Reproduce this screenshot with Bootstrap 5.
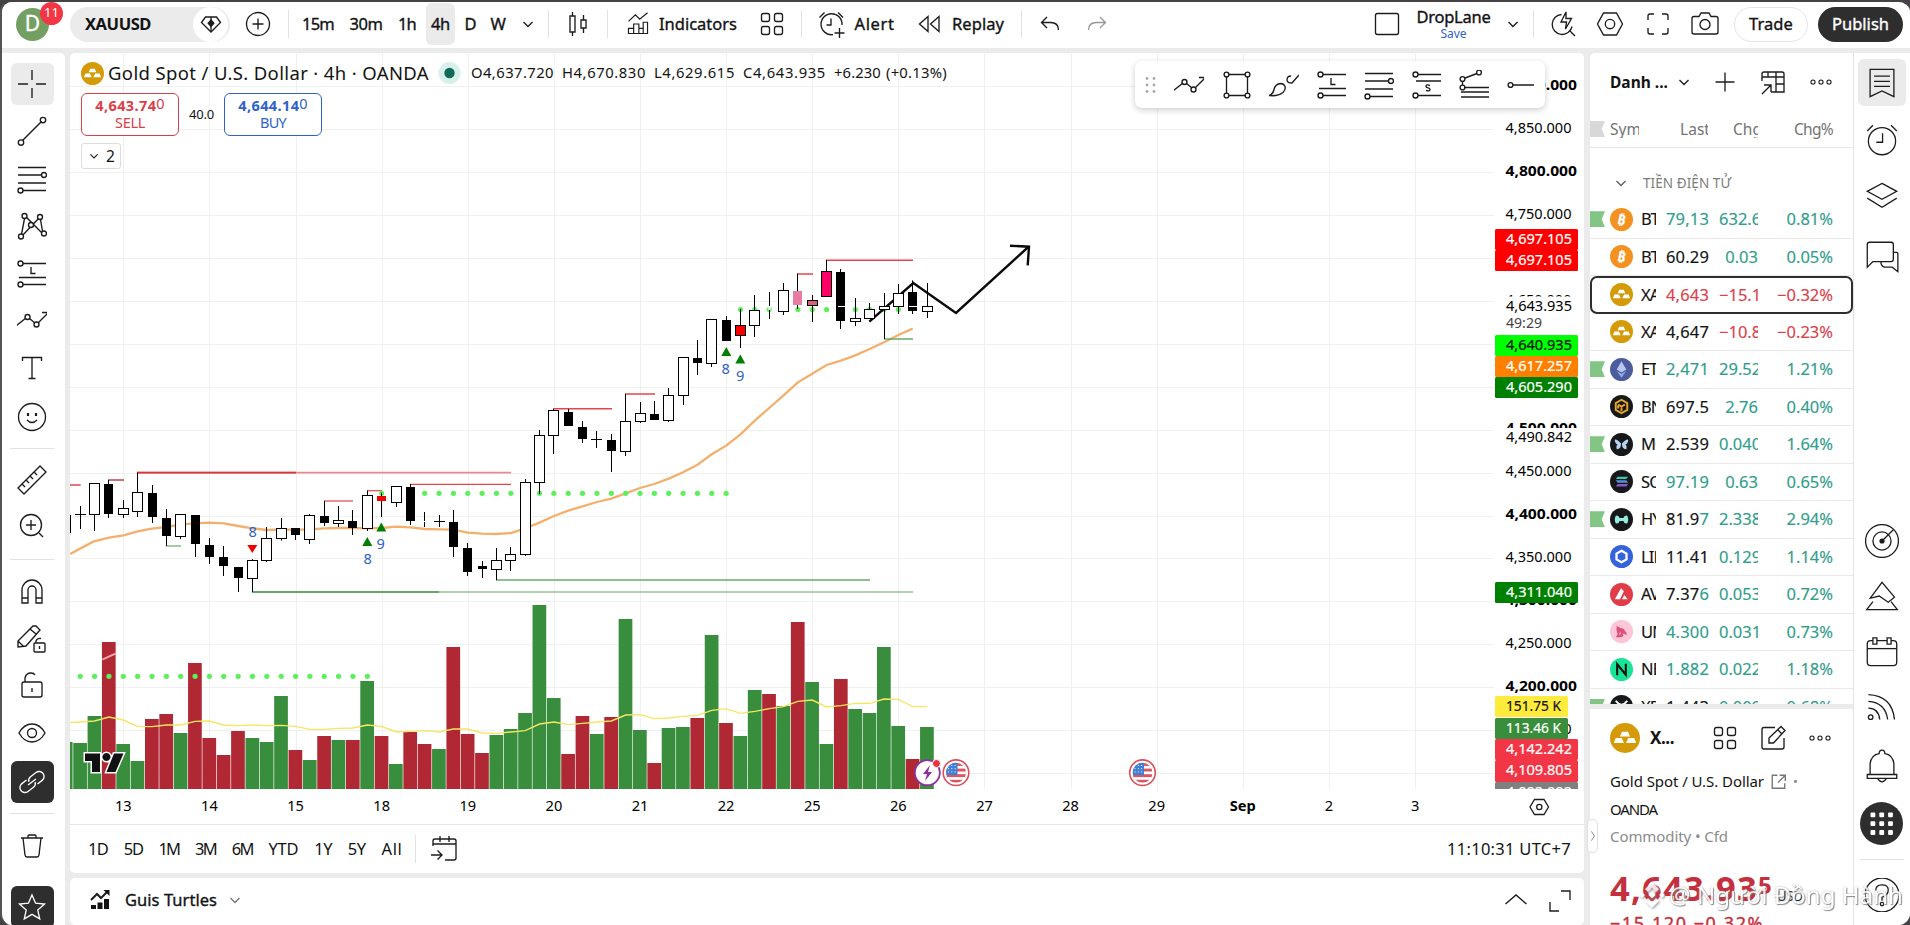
<!DOCTYPE html>
<html lang="vi">
<head>
<meta charset="utf-8">
<title>XAUUSD</title>
<link href="https://cdn.jsdelivr.net/npm/bootstrap@5.3.0/dist/css/bootstrap.min.css" rel="stylesheet">
<style>
html,body{height:925px;overflow:hidden}
body{background:#454245;font-family:"Noto Sans","Open Sans",sans-serif;color:#131313;font-size:16.5px;line-height:1.2}
.app{width:1910px;height:925px;background:#ebebeb;border-top:2px solid #454245;border-left:2px solid #565356;border-radius:12px;overflow:hidden;display:grid;grid-template-rows:46px 872px;row-gap:5px}
.ic{width:30px;height:30px;fill:none;stroke:#1c1c1c;stroke-width:1.35;flex:none;overflow:visible}
.t{white-space:nowrap;display:inline-block;flex:none}
.med{-webkit-text-stroke:.35px currentColor}
.topbar{display:grid;align-items:center;justify-items:center;padding-left:1px;
 grid-template-columns:59px 176px 40px 20px 40px 56px 26px 41px 19px 36px 24px 16px 44px 14px 134px 48px 10px 99px 112px 8px 49px 46px 250px 34px 99px 20px 21px 38px 56px 40px 54px 78px 101px;padding-bottom:2px}
.vsep{width:1px;height:28px;background:#e2e2e2}
.avatar{width:33px;height:33px;border-radius:50%;background:#739f63;color:#fff;font-size:21px;position:relative}
.notif{position:absolute;left:24px;top:-6px;width:23px;height:23px;border-radius:50%;background:#f23645;color:#fff;font-size:13px;-webkit-text-stroke:0}
.sympill{width:160px;height:35px;border-radius:18px;background:#ebebeb;padding:0 2px 0 15px}
.disc{width:35px;height:35px;border-radius:50%;background:#fff}
.on{background:#ebebeb;border-radius:6px}
.cur{height:42px;width:29px}
.tradebtn{height:35px;width:74px;border:1px solid #e4e4e4;border-radius:18px}
.pubbtn{height:35px;width:85px;background:#2e2e2e;color:#fff;border-radius:18px}
.main{display:grid;grid-template-columns:63px 1519px 270px 56px}
.tools{background:#fff;border-radius:0 5px 0 0;display:grid;justify-items:center;align-items:center;overflow:hidden;padding-top:7px;padding-right:3px;
 grid-template-rows:48px 46px 50px 44px 52px 40px 56px 41px 22px 42px 50px 16px 48px 47px 46px 50px 47px 16px 49px 74px}
.tb{width:43px;height:42px;border-radius:6px}
.dark{background:#2e2e2e}.dark .ic{stroke:#fff}
.hsep{height:1px;width:44px;background:#e0e0e0}
.mid{margin-left:5px;display:grid;grid-template-rows:820px 47px;row-gap:5px;min-width:0}
.pane{background:#fff;border-radius:5px;overflow:hidden;position:relative}
.plot{display:block;width:1514px;height:771px}
.ranges{height:49px;border-top:1px solid #e6e6e6;padding:0 13px 1px 18px;gap:15.7px;font-size:16.5px}
.legend{position:absolute;left:11px;top:8px}
.quote{width:98px;height:43px;border:1px solid;border-radius:6px;background:#fff;font-size:14.5px;line-height:17px}
.sell{color:#d8404a}.buy{color:#2f62c9}
.two{width:40px;height:26px;border:1px solid #dcdcdc;border-radius:3px;background:#fff;font-size:15.5px}
.floatbar{position:absolute;left:1065px;top:8px;width:410px;height:47px;border-radius:7px;background:#fff;box-shadow:0 2px 6px rgba(0,0,0,.2);display:grid;align-items:center;justify-items:center;grid-template-columns:30px 48px 47px 48px 47px 48px 48px 46px 48px}
.watch{display:grid;grid-template-rows:651px 216px;row-gap:5px;border-right:1px solid #e4e4e4;position:relative;margin-left:6px;z-index:1}
.wl{background:#fff;border-radius:5px 0 0 0;overflow:hidden}
.whead{height:58px;display:grid;align-items:center;grid-template-columns:20px 59px 31px 50px 45px 51px}
.wcols{height:37px;border-bottom:1px solid #e6e6e6;color:#747474;font-size:15.5px}
.rowgrid{display:grid;align-items:center;grid-template-columns:20px 31px 15px 10px 43px 10px 39px 75px}
.wrow{height:37.5px;border-bottom:1px solid #e9e9e9;font-size:16.5px;-webkit-text-stroke:.15px currentColor}
.wrow.sel{border:2px solid #2e2e2e;border-radius:7px}
.wrow.sel .rowgrid{margin:0 -2px}
.rowgrid>div{overflow:hidden;white-space:nowrap}
.sy{letter-spacing:-.9px}
.flag{width:15px;height:16px;background:#83c585;clip-path:polygon(0 0,100% 0,78% 50%,100% 100%,0 100%)}
.up{color:#2f9e8b}.dn{color:#dc404b}
.coin{width:23px;height:23px;display:block}
.detail{background:#fff;overflow:hidden;padding:14px 0 0 20px}
.rail{background:#fff;display:grid;justify-items:center;align-items:center;overflow:hidden;padding-top:6px;padding-right:1px;
 grid-template-rows:47px 68px 46px 74px 220px 54px 56px 56px 54px 64px 50px 22px 50px}
.rail .ic{width:34px;height:34px;stroke-width:1.15}
.grab{position:absolute;left:-3px;top:766px;width:11px;height:34px;background:#fff;border:1px solid #e0e0e0;border-radius:5px}
.wmark{position:absolute;left:1637px;top:880px;color:#fff;font-size:24px;text-shadow:1px 1px 1px #777,0 0 2px #999;z-index:5;opacity:.85}
text{font-family:"Noto Sans",sans-serif}
</style>
</head>
<body>
<svg width="0" height="0" class="position-absolute">
<symbol id="chev" viewBox="0 0 30 30"><path d="M10.500 13l4.500 4.500 4.500-4.500"/></symbol>
<symbol id="gem" viewBox="0 0 30 30"><path d="M9.500 8h11l4 5.500-9.500 9.500-9.500-9.500z"/><path d="M15 8v4M15 17v5" /><path d="M15 11l2.800 3.200L15 17.500l-2.800-3.300z" fill="#1c1c1c"/></symbol>
<symbol id="pluscirc" viewBox="0 0 30 30"><circle cx="15" cy="15" r="11.500"/><path d="M15 9.500v11M9.500 15h11"/></symbol>
<symbol id="plus" viewBox="0 0 30 30"><path d="M15 5.500v19M5.500 15h19"/></symbol>
<symbol id="candles" viewBox="0 0 30 30"><path d="M7 7h5v16H7zM9.500 3v4M9.500 23v4M18 11h5v8h-5zM20.500 6v5M20.500 19v5"/></symbol>
<symbol id="indic" viewBox="0 0 30 30"><path d="M4 12l8-7.500 5 5 9-7.500M4 26v-6h6v6zM10 26V15h6v11M16 20h5v6M21 26V13h5v13H4"/></symbol>
<symbol id="four" viewBox="0 0 30 30"><rect x="4.500" y="4.500" width="8" height="8" rx="2"/><rect x="17.500" y="4.500" width="8" height="8" rx="2"/><rect x="4.500" y="17.500" width="8" height="8" rx="2"/><rect x="17.500" y="17.500" width="8" height="8" rx="2"/></symbol>
<symbol id="alertp" viewBox="0 0 30 30"><path d="M25 16a10.500 10.500 0 1 0-9 9.600M14 9.500V16H9.500M2.500 8.500l5-5M21 3.500l5 5M22.500 19v10M17.500 24h10"/></symbol>
<symbol id="alarm" viewBox="0 0 30 30"><circle cx="15" cy="16" r="12"/><path d="M15.500 9v8H10M2 7l5-5M23 2l5 5"/></symbol>
<symbol id="replay" viewBox="0 0 30 30"><path d="M14 7.500v15L5.500 15zM25 7.500v15L16.500 15z"/></symbol>
<symbol id="undo" viewBox="0 0 30 30"><path d="M12 8l-5.500 5.500L12 19M7 13.500h8.500q8 0 8 7.500"/></symbol>
<symbol id="squ" viewBox="0 0 30 30"><rect x="3.500" y="4.500" width="23" height="21" rx="2"/></symbol>
<symbol id="qsearch" viewBox="0 0 30 30"><path d="M13.500 5.500a10 10 0 1 0 10.500 12M22 22l5 5M18 3l-5 10h5.500l-1 7 6-10.500H18z"/></symbol>
<symbol id="hexa" viewBox="0 0 30 30"><path d="M8.500 4h13l6 11-6 11h-13l-6-11z"/><circle cx="15" cy="15" r="4.700"/></symbol>
<symbol id="full" viewBox="0 0 30 30"><path d="M5 11V7q0-2 2-2h4M19 5h4q2 0 2 2v4M25 19v4q0 2-2 2h-4M11 25H7q-2 0-2-2v-4"/></symbol>
<symbol id="cam" viewBox="0 0 30 30"><path d="M4 7.500h5l2-3.500h8l2 3.500h5q2 0 2 2V23q0 2-2 2H4q-2 0-2-2V9.500q0-2 2-2z"/><circle cx="15" cy="15.500" r="5"/></symbol>
<symbol id="cross" viewBox="0 0 30 30"><path d="M15 1v10M15 19v10M1 15h10M19 15h10"/></symbol>
<symbol id="trend" viewBox="0 0 30 30"><path d="M5.500 24.500L24.500 5.500"/><circle cx="4" cy="26.500" r="2.700"/><circle cx="26" cy="4" r="2.700"/></symbol>
<symbol id="fib" viewBox="0 0 30 30"><path d="M1 3.500h28M1 11h24M1 19h28M6 26.500h23"/><circle cx="27" cy="11" r="2.500"/><circle cx="3.500" cy="26.500" r="2.500"/></symbol>
<symbol id="patt" viewBox="0 0 30 30"><path d="M4 26L8 5l18 18L23 6 4 26"/><g fill="#fff"><circle cx="4" cy="25.500" r="2.500"/><circle cx="7.500" cy="5" r="2.500"/><circle cx="14" cy="14" r="2.500"/><circle cx="23" cy="6" r="2.500"/><circle cx="27" cy="22.500" r="2.500"/></g></symbol>
<symbol id="posl" viewBox="0 0 30 30"><path d="M6 4.500h23M2 18.500h27M6 25.500h23M14 8v6.500h4.500"/><circle cx="3.500" cy="4.500" r="2.500"/><circle cx="3.500" cy="25.500" r="2.500"/></symbol>
<symbol id="poss" viewBox="0 0 30 30"><path d="M6 4.500h23M4 11h25M6 25.500h23"/><path d="M18 15.500q-4-1.500-4 .8 0 1.200 2 1.500t2 1.600q0 2.300-4 1"/><circle cx="3.500" cy="4.500" r="2.500"/><circle cx="3.500" cy="25.500" r="2.500"/></symbol>
<symbol id="zig" viewBox="0 0 30 30"><path d="M-1 21l10-8M12.500 13.500l5.500 4.500M21 18L31 8M25 7.500h6.500v7"/><circle cx="10.500" cy="12" r="2.500"/><circle cx="19.500" cy="19.500" r="2.500"/></symbol>
<symbol id="bigt" viewBox="0 0 30 30"><path d="M5.500 8V4.500h19V8M15 4.500v21M11.500 25.500h7"/></symbol>
<symbol id="smile" viewBox="0 0 30 30"><circle cx="15" cy="15" r="13.500"/><path d="M10 18q5 5 10 0"/><path d="M11 11v3M19 11v3" stroke-width="2.200"/></symbol>
<symbol id="ruler" viewBox="0 0 30 30"><path d="M1 23L23 1l6 6L7 29zM5 19l3 3M9 15l3 3M13 11l3 3M17 7l3 3"/></symbol>
<symbol id="zoomin" viewBox="0 0 30 30"><circle cx="14" cy="14" r="10.500"/><path d="M22 22l4 4M14 9v10M9 14h10"/></symbol>
<symbol id="magnet" viewBox="0 0 30 30"><path d="M5 27V14a10 10 0 0 1 20 0v13h-6V14a4 4 0 0 0-8 0v13zM5 22h6M19 22h6"/></symbol>
<symbol id="pencil" viewBox="0 0 30 30"><path d="M1 23v-6L16 2h3l4 4-14 16zM1 17l6 6M13 5l6 5"/><rect x="17" y="19" width="11" height="9" rx="1" fill="#fff"/><path d="M19 19v-2q1-3 5-2.500M22.500 22v3"/></symbol>
<symbol id="lock" viewBox="0 0 30 30"><rect x="5" y="12" width="20" height="15" rx="2"/><path d="M8 12V8q1-5 6-5 3 0 4 2M15 18v4"/></symbol>
<symbol id="eye" viewBox="0 0 30 30"><path d="M2 15q5-9 13-9t13 9q-5 9-13 9T2 15z"/><circle cx="15" cy="15" r="4.500"/></symbol>
<symbol id="chain" viewBox="0 0 30 30"><g transform="rotate(-38 15 15)"><path d="M12 10H6a5 5 0 0 0 0 10h7q3 0 4.500-3M18 20h6a5 5 0 0 0 0-10h-7q-3 0-4.500 3M10 15h10"/></g></symbol>
<symbol id="trash" viewBox="0 0 30 30"><path d="M4 7h22M6 7l2 17q.3 2 2 2h10q1.700 0 2-2l2-17M11 7V5q0-1 1-1h6q1 0 1 1v2"/></symbol>
<symbol id="star" viewBox="0 0 30 30"><path d="M15 3l3.600 8.200 8.900.9-6.700 6 1.900 8.800L15 22.300 7.300 26.900l1.900-8.800-6.700-6 8.900-.9z"/></symbol>
<symbol id="rect4" viewBox="0 0 30 30"><path d="M6.500 4.500h17M6.500 25.500h17M4.500 6.500v17M25.500 6.500v17"/><circle cx="4.500" cy="4.500" r="2.400"/><circle cx="25.500" cy="4.500" r="2.400"/><circle cx="4.500" cy="25.500" r="2.400"/><circle cx="25.500" cy="25.500" r="2.400"/></symbol>
<symbol id="brush" viewBox="0 0 30 30"><path d="M0 25.500q4-1 5-6t6-6q4 0 5 3t-2 6q-5 4-14 3zM30 5l-7 8q-5 0-5-3 0-4 4-4"/></symbol>
<symbol id="fan" viewBox="0 0 30 30"><path d="M3.500 11v4M6 8l12-4.500M5 17.500h25M2 22h28M2 27h28"/><circle cx="3.500" cy="9" r="2.400"/><circle cx="20" cy="2.500" r="2.400"/><circle cx="3.500" cy="17.500" r="2.400"/></symbol>
<symbol id="hline" viewBox="0 0 30 30"><circle cx="4.500" cy="15" r="2.400"/><path d="M7 15h21"/></symbol>
<symbol id="table" viewBox="0 0 30 30"><path d="M4 14V7q0-2 2-2h18q2 0 2 2v18H13M4 10h22M10 5v5M18 5v20M18 17h8M4 27l9-9M6 18h7v7"/></symbol>
<symbol id="ooo" viewBox="0 0 30 30"><circle cx="5" cy="15" r="2.600"/><circle cx="15" cy="15" r="2.600"/><circle cx="25" cy="15" r="2.600"/></symbol>
<symbol id="wlist" viewBox="0 0 30 30"><path d="M4.500 3h21v24L15 22 4.500 27zM8 9h14M8 13.500h14M8 18h14"/></symbol>
<symbol id="layers" viewBox="0 0 30 30"><path d="M15 3l13 7-13 7-13-7zM2 16l13 8 13-8"/></symbol>
<symbol id="chat" viewBox="0 0 30 30"><path d="M4 2h19q2 0 2 2v13q0 2-2 2H7l-5 5V4q0-2 2-2zM25 11h3q1 0 1 1v16l-5-4h-7q-3-1-3-5"/></symbol>
<symbol id="radar" viewBox="0 0 30 30"><circle cx="15" cy="15" r="14.500"/><circle cx="15" cy="15" r="8"/><circle cx="15" cy="15" r="1.700" fill="#1c1c1c"/><path d="M15 15L25 5"/></symbol>
<symbol id="pine" viewBox="0 0 30 30"><path d="M4.500 17L15 3l11 13-5.500 4.500-8-5.500zM7 20l-5.500 7h27L23 20"/></symbol>
<symbol id="cal" viewBox="0 0 30 30"><rect x="2" y="5" width="26" height="22" rx="3"/><path d="M2 12h26"/><path fill="#fff" d="M7 2.500h3.500V8H7zM19.500 2.500H23V8h-3.500z"/></symbol>
<symbol id="cast" viewBox="0 0 30 30"><circle cx="5" cy="24" r="2"/><path d="M3 16q9 0 10 10M3 10q15 1 17 16M3 4q21 1 23 22"/></symbol>
<symbol id="bell" viewBox="0 0 30 30"><path d="M4.500 22V13q1-8 8-9 0-3 2.500-3t2.500 3q7 1 8 9v9M2 22.500h26v3.500H2zM11 26q4 6 8 0"/></symbol>
<symbol id="help" viewBox="0 0 30 30"><circle cx="15" cy="15" r="15"/><path d="M9.500 11q0-5 5.500-5t5.500 4.500-5.500 6.500v3"/><circle cx="15" cy="23" r="1.500"/></symbol>
<symbol id="edit" viewBox="0 0 30 30"><path d="M17 4.500H6q-2 0-2 2V24q0 2 2 2h18q2 0 2-2v-9M11 20v-5L23 3.500l4 4L15.500 20zM20 7l4 4"/></symbol>
<symbol id="ext" viewBox="0 0 30 30"><path d="M13 4H4v23h22v-9M17 4h10v10M27 4L14 17" stroke-width="2.400"/></symbol>
<symbol id="calgo" viewBox="0 0 30 30"><path d="M4 12V7q0-2 2-2h19q2 0 2 2v17q0 2-2 2h-9M4 10h23M11 2v6M20 2v6M2 21h11M8.500 16.500L13 21l-4.500 4.500"/></symbol>
<symbol id="goldbars" viewBox="0 0 24 24"><circle cx="12" cy="12" r="12" fill="#d49a08" stroke="none"/><path stroke="none" fill="#fff" d="M9.600 7h4.800l1.600 3.700H8zM4.600 12h4.700l1.900 4H3zM14.700 12h4.700l1.600 4h-8.200z"/></symbol>
</svg>

<div class="app">
 <header class="topbar bg-white">
  <div class="avatar d-flex align-items-center justify-content-center med">D<span class="notif d-flex align-items-center justify-content-center">11</span></div>
  <div class="sympill d-flex align-items-center justify-content-between"><span class="t fw-bold" data-w="66">XAUUSD</span><span class="disc d-flex align-items-center justify-content-center"><svg class="ic"><use href="#gem"/></svg></span></div>
  <svg class="ic"><use href="#pluscirc"/></svg><i class="vsep"></i>
  <span class="t med" data-w="32">15m</span><span class="t med" data-w="33">30m</span><span class="t med" data-w="18">1h</span>
  <span class="on cur d-flex align-items-center justify-content-center"><span class="t med" data-w="19">4h</span></span>
  <span class="t med" data-w="12">D</span><span class="t med" data-w="15">W</span>
  <svg class="ic"><use href="#chev"/></svg><i class="vsep"></i><svg class="ic"><use href="#candles"/></svg><i class="vsep"></i>
  <span class="d-flex align-items-center"><svg class="ic me-1" style="width:26px"><use href="#indic"/></svg><span class="t med ms-1" data-w="78">Indicators</span></span>
  <svg class="ic"><use href="#four"/></svg><i class="vsep"></i>
  <span class="d-flex align-items-center gap-2"><svg class="ic"><use href="#alertp"/></svg><span class="t med" data-w="40">Alert</span></span>
  <span class="d-flex align-items-center gap-2" style="margin-left:-4px"><svg class="ic"><use href="#replay"/></svg><span class="t med" data-w="52">Replay</span></span>
  <i class="vsep"></i><svg class="ic"><use href="#undo"/></svg>
  <svg class="ic" style="transform:scaleX(-1);opacity:.45"><use href="#undo"/></svg><span></span>
  <svg class="ic"><use href="#squ"/></svg>
  <span class="text-center"><span class="t med d-block" data-w="74">DropLane</span><span class="t buy d-block mx-auto" data-w="26" style="font-size:12px;width:26px">Save</span></span>
  <svg class="ic"><use href="#chev"/></svg><i class="vsep"></i>
  <svg class="ic"><use href="#qsearch"/></svg><svg class="ic"><use href="#hexa"/></svg><svg class="ic"><use href="#full"/></svg><svg class="ic"><use href="#cam"/></svg>
  <span class="tradebtn d-flex align-items-center justify-content-center"><span class="t med" data-w="44">Trade</span></span>
  <span class="pubbtn d-flex align-items-center justify-content-center"><span class="t med" data-w="57">Publish</span></span>
 </header>

 <div class="main">
  <nav class="tools">
   <span class="tb on d-flex align-items-center justify-content-center"><svg class="ic"><use href="#cross"/></svg></span>
   <svg class="ic"><use href="#trend"/></svg><svg class="ic"><use href="#fib"/></svg><svg class="ic"><use href="#patt"/></svg><svg class="ic"><use href="#posl"/></svg><svg class="ic"><use href="#zig"/></svg><svg class="ic"><use href="#bigt"/></svg><svg class="ic"><use href="#smile"/></svg><i class="hsep"></i>
   <svg class="ic"><use href="#ruler"/></svg><svg class="ic"><use href="#zoomin"/></svg><i class="hsep"></i>
   <svg class="ic"><use href="#magnet"/></svg><svg class="ic"><use href="#pencil"/></svg><svg class="ic"><use href="#lock"/></svg><svg class="ic"><use href="#eye"/></svg>
   <span class="tb dark d-flex align-items-center justify-content-center"><svg class="ic"><use href="#chain"/></svg></span><i class="hsep"></i>
   <svg class="ic"><use href="#trash"/></svg>
   <span class="tb dark d-flex align-items-center justify-content-center"><svg class="ic"><use href="#star"/></svg></span>
  </nav>

  <div class="mid">
   <section class="pane">
    <svg class="plot" id="plot" viewBox="70 53 1514 771"></svg>
    <div class="legend">
     <div class="d-flex align-items-center" style="height:24px">
      <svg class="ic" style="width:23px;height:23px"><use href="#goldbars"/></svg>
      <span class="t ms-1" data-w="321" style="font-size:18.500px">Gold Spot / U.S. Dollar · 4h · OANDA</span>
      <svg class="ic mx-2" style="width:24px;height:24px;stroke:none"><circle cx="12.500" cy="12" r="11" fill="#d9efec"/><circle cx="12.500" cy="12" r="5.200" fill="#0d6b58"/></svg>
      <span class="d-flex" style="font-size:14.800px;gap:8px;margin-left:2px"><span class="t" data-w="83">O4,637.720</span><span class="t" data-w="84">H4,670.830</span><span class="t" data-w="81">L4,629.615</span><span class="t" data-w="83">C4,643.935</span><span class="t" data-w="47">+6.230</span><span class="t" data-w="61" style="margin-left:-3px">(+0.13%)</span></span>
     </div>
     <div class="d-flex align-items-center" style="margin-top:8px">
      <div class="quote sell text-center"><div style="margin-top:3px"><b class="t" data-w="61">4,643.74</b><span style="position:relative;top:-2px">0</span></div><div><span class="t" data-w="30">SELL</span></div></div>
      <span class="t" data-w="25" style="font-size:13px;margin:0 10px">40.0</span>
      <div class="quote buy text-center"><div style="margin-top:3px"><b class="t" data-w="61">4,644.14</b><span style="position:relative;top:-2px">0</span></div><div><span class="t" data-w="26">BUY</span></div></div>
     </div>
     <div class="two d-flex align-items-center" style="margin-top:7px"><svg class="ic" style="width:24px;height:30px"><use href="#chev"/></svg>2</div>
    </div>
    <div class="floatbar">
     <svg class="ic"><g fill="#aaa" stroke="none"><circle cx="12" cy="8.500" r="1.400"/><circle cx="19" cy="8.500" r="1.400"/><circle cx="12" cy="15" r="1.400"/><circle cx="19" cy="15" r="1.400"/><circle cx="12" cy="21.500" r="1.400"/><circle cx="19" cy="21.500" r="1.400"/></g></svg>
     <svg class="ic"><use href="#zig"/></svg><svg class="ic"><use href="#rect4"/></svg><svg class="ic"><use href="#brush"/></svg><svg class="ic"><use href="#posl"/></svg><svg class="ic"><use href="#fib"/></svg><svg class="ic"><use href="#poss"/></svg><svg class="ic"><use href="#fan"/></svg><svg class="ic"><use href="#hline"/></svg>
    </div>
    <div class="ranges d-flex align-items-center">
     <span class="t" data-w="20">1D</span><span class="t" data-w="19">5D</span><span class="t" data-w="21">1M</span><span class="t" data-w="21">3M</span><span class="t" data-w="21">6M</span><span class="t" data-w="30">YTD</span><span class="t" data-w="18">1Y</span><span class="t" data-w="18">5Y</span><span class="t" data-w="21">All</span>
     <i class="vsep" style="margin-left:-3px"></i><svg class="ic" style="margin-left:-3px"><use href="#calgo"/></svg>
     <span class="t ms-auto" data-w="124">11:10:31 UTC+7</span>
    </div>
   </section>
   <section class="pane d-flex align-items-center" style="padding:0 9px 3px 15px">
    <svg class="ic" viewBox="0 0 30 30"><path d="M6 15l6-6 4 4 7-7" stroke-width="2"/><path d="M18.500 5h6v6z M6 20h5v4H6zM12.500 17.500h5V24h-5zM19 14h5v10h-5z" fill="#131313" stroke="none"/></svg>
    <span class="t med" data-w="92" style="margin-left:10px">Guis Turtles</span>
    <svg class="ic" style="opacity:.6;margin-left:3px"><use href="#chev"/></svg>
    <svg class="ic ms-auto" viewBox="0 0 30 30" style="margin-right:14px"><path d="M4.500 19L15 10l10.500 9"/></svg>
    <svg class="ic" viewBox="0 0 30 30"><path d="M16 6h9v9M5 17v9h9"/></svg>
   </section>
  </div>

  <aside class="watch">
   <div class="wl">
    <div class="whead"><span></span><span class="t fw-bold" data-w="59" style="font-size:15.500px">Danh ...</span><svg class="ic"><use href="#chev"/></svg><svg class="ic mx-auto"><use href="#plus"/></svg><svg class="ic mx-auto"><use href="#table"/></svg><svg class="ic mx-auto" style="width:24px"><use href="#ooo"/></svg></div>
    <div class="wcols d-flex align-items-center"><span class="flag" style="background:#d8d8d8"></span>
     <span class="overflow-hidden" style="width:29px;margin-left:5px;flex:none"><span class="t">Sym</span></span><span class="overflow-hidden" style="width:28px;margin-left:41px;flex:none"><span class="t" data-w="30">Last</span></span><span class="overflow-hidden" style="width:25px;margin-left:25px;flex:none"><span class="t" data-w="29">Chg</span></span><span class="t" data-w="39" style="margin-left:36px">Chg%</span></div>
    <div class="d-flex align-items-center" style="height:53px;padding:17px 0 0 16px;color:#7c7c7c;font-size:13.500px"><svg class="ic" style="opacity:.7"><use href="#chev"/></svg><span class="t" data-w="88" style="margin-left:7px">TIỀN ĐIỆN TỬ</span></div>
    <div id="rows"></div>
   </div>
   <div class="detail">
    <div class="d-flex align-items-center"><svg class="ic"><use href="#goldbars"/></svg><span class="t fw-bold" data-w="24" style="margin:0 36px 0 10px;font-size:17px">X...</span><svg class="ic" style="margin-right:18px"><use href="#four"/></svg><svg class="ic" style="margin-right:20px"><use href="#edit"/></svg><svg class="ic" style="width:24px"><use href="#ooo"/></svg></div>
    <div style="margin-top:15px;line-height:27.500px;font-size:15px"><div class="d-flex align-items-center"><span class="t" data-w="154">Gold Spot / U.S. Dollar</span><svg class="ic" style="width:17px;height:17px;margin:0 6px 0 6px;stroke:#777"><use href="#ext"/></svg><span style="color:#888;font-size:13px">•</span></div>
    <span class="t d-block" data-w="47">OANDA</span><span class="t" data-w="118" style="color:#8b8b8b">Commodity • Cfd</span></div>
    <div class="d-flex align-items-baseline" style="margin-top:15px;color:#c4303d;line-height:44px;height:42px"><b class="t" data-w="148" style="font-size:34.500px">4,643.93</b><b style="font-size:24px;position:relative;top:-7px">5</b><span class="t text-dark" data-w="26" style="font-size:13.500px;margin-left:5px">USD</span></div>
    <div class="med" style="color:#c4303d;font-size:18px;margin-top:3px;line-height:24px"><span class="t" data-w="154">−15.120 −0.32%</span></div>
   </div>
   <span class="grab d-flex align-items-center justify-content-center"><svg width="6" height="12" fill="none" stroke="#888"><path d="M1.500 1.500L4.500 6l-3 4.500"/></svg></span>
  </aside>

  <nav class="rail">
   <span class="on d-flex align-items-center justify-content-center" style="width:48px;height:47px"><svg class="ic"><use href="#wlist"/></svg></span>
   <svg class="ic"><use href="#alarm"/></svg><svg class="ic"><use href="#layers"/></svg><svg class="ic"><use href="#chat"/></svg><span></span>
   <svg class="ic"><use href="#radar"/></svg><svg class="ic"><use href="#pine"/></svg><svg class="ic"><use href="#cal"/></svg><svg class="ic"><use href="#cast"/></svg><svg class="ic"><use href="#bell"/></svg>
   <svg width="43" height="43"><circle cx="21.500" cy="21.500" r="21.500" fill="#2e2e2e"/><g fill="#fff" id="nine"></g></svg>
   <i class="hsep"></i><svg class="ic"><use href="#help"/></svg>
  </nav>
 </div>
</div>
<div class="wmark d-flex align-items-center"><svg width="30" height="30" viewBox="0 0 30 30" style="filter:drop-shadow(1px 1px 1px #888)"><path fill="#fff" d="M15 2l7 7-3 3-4-4-4 4-3-3zM15 28l7-7-3-3-4 4-4-4-3 3zM2 15l3-3 3 3-3 3zM22 15l3-3 3 3-3 3zM11.500 15l3.500-3.500 3.500 3.500-3.500 3.500z"/></svg><span class="t" data-w="234" style="margin-left:2px">@ Người Đồng Hành</span></div>

<script src="https://cdn.jsdelivr.net/npm/bootstrap@5.3.0/dist/js/bootstrap.bundle.min.js"></script>
<script>
/* chart: y values are thirds of a pixel below y0 */
const X=i=>123.3+14.353*i, A=v=>440+v/3, B=v=>240+v/3;
let s='';
const L=(x1,y1,x2,y2,c,w=1)=>s+=`<path d="M${x1} ${y1}L${x2} ${y2}" stroke="${c}" stroke-width="${w}" fill="none"/>`;
const R=(x,y,w,h,f,e='')=>s+=`<rect x="${x}" y="${y}" width="${w}" height="${h}" fill="${f}" ${e}/>`;
const T=(x,y,t,w,e='')=>s+=`<text x="${x}" y="${y}" font-size="14.6" ${w?`textLength="${w}" lengthAdjust="spacingAndGlyphs"`:''} ${e}>${t}</text>`;
for(let k=0;k<17;k++)L(70,Math.round(86+42.95*k)+.5,1494,Math.round(86+42.95*k)+.5,'#f0f0f0');
for(let k=0;k<16;k++)L(Math.round(X(6*k))+.5,53,Math.round(X(6*k))+.5,789,'#f0f0f0');
const vol='906G 909G 828G 606R 912G 963G 837R 822R 879G 669R 894R 945R 873R 894G 906G 768G 930R 960G 888R 900G 900R 723G 888R 972G 876R 912R 927G 621R 882R 939R 885G 867G 819G 495G 774G 942R 828R 882G 831R 537G 870G 969R 864G 861G 834R 585G 849R 888G 750G 762R 798G 546R 726G 912G 717R 807G 819G 621G 858G 957R 861G'.split(' ');
vol.forEach((v,k)=>{const x=Math.max(70,X(k-4)-7),y=A(parseInt(v));R(x,y,X(k-4)+6.7-x,789-y,v.endsWith('G')?'#388e3c':'#b02833')});
L(102.3,659.7,116,653.3,'#f4a7ad',2);
const vm=[848,846,843,831,840,859,860,855,855,844,843,855,857,855,857,856,859,868,868,865,864,855,859,876,874,872,876,867,867,879,880,876,872,852,846,854,850,846,843,825,824,836,834,829,826,811,806,820,814,806,800,784,780,801,797,790,790,777,778,800,800];
s+=`<polyline fill="none" stroke="#f5e663" stroke-width="1.400" points="${vm.map((v,k)=>Math.max(70,X(k-4))+','+A(v)).join(' ')}"/>`;
const ma=[[-3.700,342],[-2.100,305],[-1,293],[0,286],[1,274],[2,266],[3,261],[4,253],[5,250],[6,248],[7,250],[8,258],[9,265],[10,270],[11,269],[12,269],[13,268],[14,265],[15,264],[16,264],[17,265],[18,264],[19,260],[20,262],[21,267],[22,268],[23,269],[24,278],[25,281],[26,282],[27,279],[28,265]].map(p=>[p[0],A(p[1])])
.concat([848,828,812,799,786,776,760,744,732,716,697,674,643,617,583,542,504,466,427,401,375,362,346,327,307,285,266].map((v,k)=>[29+k,B(v)]));
s+=`<polyline fill="none" stroke="#f3b06c" stroke-width="2.300" points="${ma.map(p=>X(p[0])+','+p[1]).join(' ')}"/>`;
const rd='#e0474c',gn='#6aa86a';
L(70,485,80.7,485,rd,1.500);L(108,480,124,480,'#c04048',1.500);L(137,472.7,419,472.7,'#e88a8c',1.700);L(137,472.7,296,472.7,'#d8363c',1.700);
L(410,484.300,511,484.300,rd,1.200);L(324,501,353,501,rd,1.200);L(367,490.700,382,490.700,rd,1.200);L(419,472.700,511,472.700,'#e88a8c',1.700);
L(166,546,181,546,gn,1.200);L(252,592,913,592,'#98c49a',1.700);L(252,592,439,592,'#4f964f',1.700);L(496,580,870,580,gn,1.500);
L(553.500,408.700,612,408.700,rd,1.500);L(625,394,655,394,rd,1.500);L(797,274,813,274,rd,1.500);L(826,260.300,913,260.300,rd,1.500);L(884,339,913,339,gn,1.500);
const dot=(a,b,y)=>{for(let i=a;i<=b;i++)s+=`<circle cx="${X(i)}" cy="${y}" r="2.600" fill="#5cf05c"/>`};
dot(18,42,493.300);dot(43,54,309.500);dot(-3,17,676.300);
s+='<path d="M869.300 321.700L913.300 283 956 313 1028.300 247" fill="none" stroke="#0a0a0a" stroke-width="2.400"/><path d="M1010 245.700l19 1-1.300 18.600" fill="none" stroke="#0a0a0a" stroke-width="2.400"/>';
/* index, type, body top, body bottom, wick top, wick bottom */
const ca=[[-4,'w',225,278,225,278],[-3,'d',223,223,198,267],[-2,'w',130,224,130,273],[-1,'k',131,221,120,234],[0,'w',205,224,180,234],[1,'w',157,215,98,231],[2,'k',159,231,135,249],[3,'k',234,288,207,318],[4,'w',223,290,223,297],[5,'k',225,311,225,351],[6,'k',315,351,294,372],[7,'k',351,378,318,408],[8,'k',381,414,381,456],[9,'w',360,416,357,456],[10,'w',295,362,261,366],[11,'w',265,296,234,302],[12,'k',264,285,264,300],[13,'w',226,299,222,312],[14,'k',228,249,183,258],[15,'w',240,251,198,261],[16,'k',243,264,210,285],[17,'w',166,266,152,273],[18,'#f00000',168,183,158,231],[19,'w',139,188,139,201],[20,'k',141,243,132,255],[21,'n',243,246,216,261],[22,'d',243,243,225,261],[23,'k',246,321,210,351],[24,'k',324,396,309,408],[25,'k',378,387,363,414],[26,'w',361,389,324,420],[27,'w',343,362,321,393],[28,'w',127,344,117,348]];
const cb=[[29,'w',586,728,570,762],[30,'w',511,587,506,642],[31,'k',516,558,507,558],[32,'k',561,597,543,609],[33,'d',598,598,573,624],[34,'k',600,633,582,696],[35,'w',544,635,462,648],[36,'w',520,545,486,549],[37,'k',522,540,483,540],[38,'w',466,542,444,546],[39,'w',352,467,352,495],[40,'k',354,369,300,405],[41,'w',238,371,238,381],[42,'k',240,303,228,303],[43,'#f80000b',256,287,207,324],[44,'w',211,257,165,291],[45,'n',198,210,156,237],[46,'w',151,215,129,225],[47,'#e87ca2',153,195,101,207],[48,'#d8607cb',181,197,165,246],[49,'#ff0066b',94,170,60,170],[50,'k',96,243,87,267],[51,'w',235,245,174,258],[52,'w',207,236,189,236],[53,'w',199,209,159,297],[54,'w',160,200,132,222],[55,'k',156,213,121,222],[56,'w',199,215,129,234]];
const candle=(c,F)=>{const [i,t,a,b,h,l]=c,x=Math.round(X(i)-.5)+.5;L(x,F(h),x,F(l),'#000');
 if(t=='d')L(x-5.500,Math.round(F(a))+.5,x+5.500,Math.round(F(a))+.5,'#000');
 else if(t=='n')L(x,F(a),x,F(b),'#fff',2);
 else{const bd=t=='w'||t.length>7,f=t=='w'?'#fff':t=='k'?'#000':t.slice(0,7),y=Math.round(F(a)),y2=Math.round(F(b));
 bd?R(x-5,y+.5,10,Math.max(2,y2-y-1),f,'stroke="#000"'):R(x-4.500,y,9,y2-y,f)}};
ca.forEach(c=>candle(c,A));cb.forEach(c=>candle(c,B));
L(838,306.500,845,306.500,'#fff',1);L(909,306.500,917,306.500,'#fff',1);
const tri=(x,y,u,c)=>s+=`<path fill="${c}" d="M${x-5} ${u?y+9:y}h10l-5 ${u?-9:8}z"/>`;
tri(252.300,545,0,'#f00000');tri(367.300,537,1,'#008000');tri(381.300,522.500,1,'#008000');tri(726.300,347,1,'#008000');tri(740.300,354.500,1,'#008000');
[[252.600,536.700,8],[367.700,564.300,8],[380.700,548.500,9],[725.700,374,8],[740.300,380.500,9]].forEach(p=>T(p[0],p[1],p[2],0,'fill="#2f62c8" text-anchor="middle"'));
/* platform mark */
s+='<path d="M85 753.500h15v18.500h-8v-11h-7z M106.500 753a4 4 0 1 1-.1 0z M114 753.500h9.500l-8 18.500h-9z" fill="#111" stroke="#fff" stroke-width="3" paint-order="stroke"/>';
'13 14 15 18 19 20 21 22 25 26 27 28 29 Sep 2 3'.split(' ').forEach((d,k)=>T(X(6*k),811.300,d,0,'text-anchor="middle"'+(d=='Sep'?' font-weight="700"':'')));
/* events */
s+='<circle cx="927.300" cy="772.700" r="12.500" fill="#fff" stroke="#8e2fa0" stroke-width="1.800"/><path d="M930 765l-7 9h4l-2 7 7-9h-4z" fill="#8e2fa0"/><circle cx="936.500" cy="763.500" r="4" fill="#e8333f" stroke="#fff"/>';
[956,1142.500].forEach(x=>{s+=`<circle cx="${x}" cy="772.700" r="12.800" fill="#fff" stroke="#d9505a" stroke-width="1.600"/><clipPath id="f${x|0}"><circle cx="${x}" cy="772.700" r="10"/></clipPath><g clip-path="url(#f${x|0})">`;for(let k=0;k<4;k++)R(x-10,763+5.600*k,20,2.900,'#dd5560');R(x-10,762,11.500,13,'#3f7fd6');for(let a=0;a<9;a++)R(x-8+(a%3)*3.300,765+(a/3|0)*3.200,1,1,'#fff');s+='</g>'});
/* price scale */
for(let k=0;k<16;k++){const bold=k%2==0,p=(4900-50*k).toLocaleString('en-US')+'.000';T(1505.500,89.800+42.95*k,p,bold?71.500:66,(bold?'font-weight="700"':''))}
R(1495,296.500,88,36,'#fff');T(1506,310.700,'4,643.935',66);T(1506,327.500,'49:29',36,'fill="#444"');
R(1495,428,88,17,'#fff');T(1506,442.300,'4,490.842',66);
[[229,21,'#ff0000','4,697.105',83,'#fff'],[250,21,'#ff0000','4,697.105',83,'#fff'],[335,21,'#00ff00','4,640.935',83,'#131313'],[356,21,'#ff8000','4,617.257',83,'#fff'],[377,21,'#008000','4,605.290',83,'#fff'],[582,21,'#008000','4,311.040',83,'#fff'],[696,21,'#ffeb3b','151.75 K',73,'#131313'],[718,21,'#388e3c','113.46 K',73,'#fff'],[739,21,'#f23645','4,142.242',83,'#fff'],[760,22,'#f23645','4,109.805',83,'#fff'],[782,21,'#808080','4,092.092',83,'#fff']].forEach(a=>{R(1495,a[0],a[4],a[1],a[2],'rx="1.500"');T(1506,a[0]+15,a[3],a[4]==83?66:55,`fill="${a[5]}" stroke="${a[5]}" stroke-width=".2"`)});
R(1494,789,90,35,'#fff');
s+='<path d="M1534.500 799.500h9.500l4.500 7.500-4.500 7.500h-9.500l-4.500-7.500z" fill="none" stroke="#1c1c1c" stroke-width="1.300"/><circle cx="1539.300" cy="807" r="2.600" fill="none" stroke="#1c1c1c" stroke-width="1.300"/>';
document.getElementById('plot').innerHTML=s;

/* coins */
const w='fill="#fff"';
const coin={
btc:['#f39220',`<text x="12" y="17.500" font-size="15" font-weight="700" text-anchor="middle" ${w} transform="rotate(12 12 12)">₿</text>`],
au:['#d49a08',`<path ${w} d="M9.600 7h4.800l1.600 3.700H8zM4.600 12h4.700l1.900 4H3zM14.700 12h4.700l1.600 4h-8.200z"/>`],
eth:['#4c5c9c','<path fill="#b8c8f4" d="M12 3.500l5 8.500-5 3-5-3z"/><path fill="#8fa6ea" d="M12 20.500l5-7-5 3-5-3z"/>'],
bnb:['#17181a','<path fill="none" stroke="#e5a62a" stroke-width="2" d="M12 5l6 3.500v7L12 19l-6-3.500v-7zM8.500 10L12 12l3.500-2M12 12v5M8.500 14v-3"/>'],
mor:['#17181a','<path fill="#b8d4f2" d="M11.500 11Q7 6 5 7q0 4 3 5-2 1-1 5 4 0 4.500-5zM12.500 11Q17 6 19 7q0 4-3 5 2 1 1 5-4 0-4.500-5z"/>'],
sol:['#17181a','<path fill="#38c8b0" d="M8 7h11l-2 2.500H6z"/><path fill="#5a8fd8" d="M6 10.800h11l2 2.500H8z"/><path fill="#8858c8" d="M8 14.600h11l-2 2.500H6z"/>'],
hyp:['#17181a','<path fill="#97ecdf" d="M6 8q3-1 4 2.500h4Q15 7 18 8q2 4 0 8-3 1-4-2.500h-4Q9 17 6 16q-2-4 0-8z"/>'],
link:['#3663dc','<path fill="none" stroke="#fff" stroke-width="2.400" d="M12 6l5.200 3v6L12 18l-5.200-3V9z"/>'],
av:['#e23c48',`<path ${w} d="M11.500 5.500l3 3-4 8.500H5zM15 12.500l3.500 4.500h-6z"/>`],
uni:['#fcc5d8','<path fill="#d83c6c" d="M7 6l3 2 4 1 3 4 .5 3-2.500-1.500-2-.5 1 2.500-2 1.500H6l2-3q-2-4-1-9zM10.500 12l-1 3.500 2-1z" fill-rule="evenodd" opacity=".85"/>'],
near:['#18e498','<path fill="none" stroke="#111" stroke-width="2.200" d="M7.500 18V6.500L16.500 17.500V6"/>'],
xrp:['#17181a','<path fill="none" stroke="#fff" stroke-width="2" d="M6 6q6 8 12 0M6 18q6-8 12 0"/>']};
/* flag, coin, symbol, last, last green digits, change, percent, rising, colour of last, selected */
const rows=[[1,'btc','BT','79,13','','632.6','0.81',1,'up'],[0,'btc','BT','60.29','','0.03','0.05',1,''],[0,'au','XA','4,643','','−15.1','−0.32',0,'dn',1],[0,'au','XA','4,647','','−10.8','−0.23',0,''],[1,'eth','ET','2,471','','29.52','1.21',1,'up'],[0,'bnb','BN','697.5','','2.76','0.40',1,''],[1,'mor','MO','2.539','','0.040','1.64',1,''],[0,'sol','SO','97.19','','0.63','0.65',1,'up'],[1,'hyp','HY','81.9','7','2.338','2.94',1,''],[0,'link','LIN','11.41','','0.129','1.14',1,''],[0,'av','AV','7.37','6','0.053','0.72',1,''],[0,'uni','UN','4.300','','0.031','0.73',1,'up'],[0,'near','NE','1.882','','0.022','1.18',1,'up'],[1,'xrp','XR','1.443','','0.009','0.68',1,'']];
document.getElementById('rows').innerHTML=rows.map(r=>{const c=r[7]?'up':'dn',cn=coin[r[1]],short=r[5].length<5;
return `<div class="wrow ${r[9]?'sel':''}"><div class="rowgrid h-100"><div>${r[0]?'<div class="flag"></div>':''}</div><div><svg class="coin" viewBox="0 0 24 24"><circle cx="12" cy="12" r="12" fill="${cn[0]}"/>${cn[1]}</svg></div><div class="sy">${r[2]}</div><div></div><div><span class="t ${r[8]}" data-w="43">${r[3]}${r[4]?`<span class="up">${r[4]}</span>`:''}</span></div><div></div><div class="${c} ${short?'text-end':''}">${r[5]}</div><div class="${c} text-end">${r[6]}%</div></div></div>`}).join('');
let n='';for(let k=0;k<9;k++)n+=`<rect x="${10.500+(k%3)*8.800}" y="${10.500+(k/3|0)*8.800}" width="4.800" height="4.800" rx="1"/>`;
document.getElementById('nine').innerHTML=n;
/* tune tracking so each label fills its slot */
document.querySelectorAll('[data-w]').forEach(e=>{if(e.classList.contains('d-block'))e.style.width='max-content';
 const wd=e.getBoundingClientRect().width;e.style.letterSpacing=((+e.dataset.w-wd)/e.textContent.length).toFixed(3)+'px'});
</script>
</body>
</html>
